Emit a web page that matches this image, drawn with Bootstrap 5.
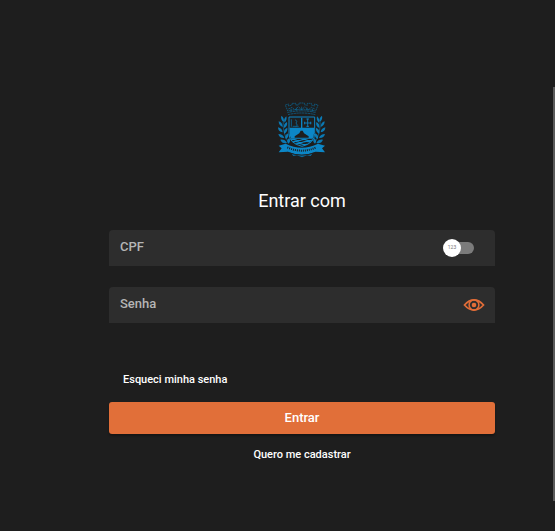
<!DOCTYPE html>
<html lang="pt-BR">
<head>
<meta charset="utf-8">
<meta name="viewport" content="width=device-width, initial-scale=1">
<title>Entrar</title>
<link href="https://cdn.jsdelivr.net/npm/bootstrap@5.3.0/dist/css/bootstrap.min.css" rel="stylesheet">
<style>
body{background:#1e1e1e;color:#fff;font-family:Roboto,"Liberation Sans",sans-serif}
.login-page{padding:102px 60px 48px 109px}
.crest{width:50px;height:56px}
.login-title{font-size:18px;line-height:24px;font-weight:400;margin:31px 0 17px}
.field{background:#2d2d2d;height:36px;padding:0 10px 0 11px;border-radius:4px 4px 0 0}
.field label.field-name{color:#b5b5b5;font-size:13px;line-height:16px;font-weight:500;padding-bottom:3px}
.field-input{background:transparent;border:0;outline:0;color:#fff;font-size:13px;min-width:0}
.field-gap{margin-bottom:21px}
.type-switch{width:31px;height:18px;margin-right:11px}
.type-track{appearance:none;width:26px;height:12px;border-radius:6px;background:#7b7b7b;margin:0}
.type-thumb{left:0;top:0;width:18px;height:18px;font-size:5px;line-height:16px;color:#777;background:#fff;pointer-events:none}
.eye-btn{width:22px;height:16px;color:#e16d38}
.small-link{font-size:11px;line-height:16px;font-weight:500;color:#fff}
.forgot-row{margin:49px 0 14px;padding-left:14px}
.btn-enter{--bs-btn-bg:#e16f39;--bs-btn-color:#fff;--bs-btn-hover-bg:#cf622e;--bs-btn-hover-color:#fff;--bs-btn-active-bg:#c25a29;--bs-btn-active-color:#fff;font-size:13px;line-height:16px;font-weight:500;height:32px;border:0;border-radius:3px;box-shadow:0 2px 2px rgba(0,0,0,.3);margin-bottom:13px}
.scroll-thumb{right:0;top:87px;bottom:30px;width:2px;background:#5b5b5b}
</style>
</head>
<body>
<main class="login-page d-flex flex-column align-items-stretch">
  <svg class="crest align-self-center" viewBox="22 11 150 168" fill="none" stroke="#0c86c6" stroke-width="3" role="img" aria-label="Brasão">
    <g stroke-width="2" stroke="#0b6c9f">
      <path d="M47 20l10-3v6l10-3v-5h12v6l9-2v-5h16v5l9 2v-6h12v5l10 3v-6l10 3-7 18q-42-10-84 0z" stroke-dasharray="5 1.5"/>
      <path d="M53 43q43-11 86 0M55 49q41-10 82 0" stroke-dasharray="7 1.5"/>
      <path d="M56 32l11-5 9 8 10-10 10 9 10-9 10 10 9-8 11 5" stroke-dasharray="6 2"/>
      <path d="M64 31v9M80 28v9M96 25v11M112 28v9M128 31v9"/>
    </g>
    <path d="M58 56h77v49q0 30-38 39-39-9-39-39z"/>
    <path d="M60 90h73M96 58v31" stroke-width="4"/>
    <path d="M103 74h22M114 61v25M110 62h8M110 84h8M105 70v8M123 70v8" stroke-width="2.500"/>
    <path d="M65 63v22M76 64l6 5-3 5 4 7-5 4M69 84h18" stroke-width="2.500" stroke="#0b6c9f"/>
    <path d="M60 91h73v14q0 8-4 16H64q-4-8-4-16z" fill="#0c86c6" stroke="none"/>
    <path d="M75 118v-4l14-9 4-8h6l4 8 14 9v4z" fill="#1e1e1e" stroke="none"/>
    <path d="M63 125q8-4 16 0t16 0 16 0 18 0M69 131q8-4 16 0t16 0 22 0M78 137q9-4 18 0t18 0" stroke-width="4"/>
    <g fill="#0b79b3" stroke="none">
      <path d="M35 52q10 7 7 18-10-6-7-18zM50 54q3 10-5 19-5-10 5-19zM27 69q12 4 12 17-12-4-12-17zM52 71q3 12-9 18-2-13 9-18zM25 87q13 3 14 15-14-2-14-15zM53 88q2 12-10 18-2-13 10-18zM26 107q14 0 18 12-15 1-18-12zM56 105q3 12-8 17-5-11 8-17zM32 124q14-2 20 10-15 3-20-10zM59 119q6 11-3 17-8-9 3-17z"/>
      <path d="M41 65q-4 34 15 67" fill="none" stroke="#0c86c6" stroke-width="1.500"/>
      <path d="M157 52q-10 7-7 18 10-6 7-18zM142 54q-3 10 5 19 5-10-5-19zM165 69q-12 4-12 17 12-4 12-17zM140 71q-3 12 9 18 2-13-9-18zM167 87q-13 3-14 15 14-2 14-15zM139 88q-2 12 10 18 2-13-10-18zM166 107q-14 0-18 12 15 1 18-12zM136 105q-3 12 8 17 5-11-8-17zM160 124q-14-2-20 10 15 3 20-10zM133 119q-6 11 3 17 8-9-3-17z"/>
      <path d="M151 65q4 34-15 67" fill="none" stroke="#0c86c6" stroke-width="1.500"/>
    </g>
    <g fill="#0c86c6" stroke="none">
      <path d="M27 142l21-6q48 24 97 0l21 6-9 8 9 12-28-2q-42 18-83 0l-28 2 9-12z"/>
      <path d="M66 166q30 9 62 0l-5 7-11-2-15 6-15-6-11 2z" fill="#0b6c9f"/>
    </g>
    <path d="M53 147q43 20 87 0" stroke="#1e1e1e" stroke-width="6" stroke-dasharray="3 3"/>
    <path d="M54 162q42 17 85 0" stroke="#1e1e1e" stroke-width="2"/>
  </svg>

  <h1 class="login-title text-center">Entrar com</h1>

  <form>
    <div class="field field-gap d-flex align-items-center">
      <label class="field-name" for="cpf">CPF</label>
      <input class="field-input flex-grow-1" id="cpf" type="text" inputmode="numeric">
      <label class="type-switch position-relative d-flex align-items-center justify-content-end">
        <input class="type-track" type="checkbox" role="switch">
        <span class="type-thumb position-absolute rounded-circle text-center">123</span>
      </label>
    </div>
    <div class="field d-flex align-items-center">
      <label class="field-name" for="senha">Senha</label>
      <input class="field-input flex-grow-1" id="senha" type="password">
      <button class="eye-btn btn p-0 border-0 d-flex" type="button" aria-label="Mostrar senha">
        <svg width="22" height="16" viewBox="0 0 22 16" fill="none" stroke="currentColor" stroke-width="1.800">
          <path d="M1.500 8Q6 2.900 11 2.900T20.500 8Q16 13.100 11 13.100T1.500 8z"/>
          <circle cx="11" cy="8" r="4.900" stroke-width="1.500"/>
          <circle cx="11" cy="8" r="2.300" fill="currentColor" stroke="none"/>
        </svg>
      </button>
    </div>
    <div class="forgot-row d-flex">
      <a class="small-link text-decoration-none" href="#">Esqueci minha senha</a>
    </div>
    <button class="btn btn-enter w-100 d-flex align-items-center justify-content-center" type="submit">Entrar</button>
    <div class="d-flex justify-content-center">
      <a class="small-link text-decoration-none" href="#">Quero me cadastrar</a>
    </div>
  </form>
</main>
<div class="scroll-thumb position-fixed" aria-hidden="true"></div>
<script src="https://cdn.jsdelivr.net/npm/bootstrap@5.3.0/dist/js/bootstrap.bundle.min.js"></script>
</body>
</html>
